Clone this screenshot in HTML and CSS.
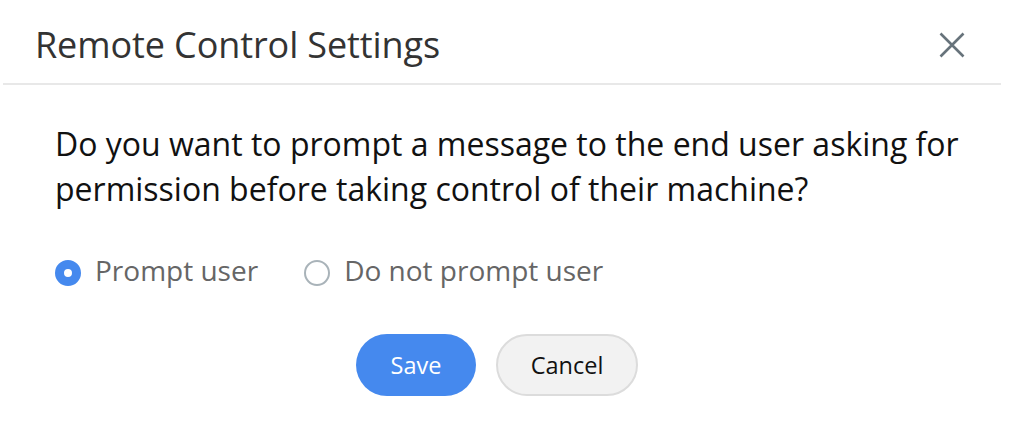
FILE: index.html
```html
<!DOCTYPE html>
<html>
<head>
<meta charset="utf-8">
<link rel="stylesheet" href="styles.css">
</head>
<body>
<div class="dialog">
  <div class="header">
    <h1 class="title">Remote Control Settings</h1>
    <button class="close" aria-label="Close">
      <svg width="26" height="26" viewBox="0 0 26 26"><path d="M1.5 1.5 L24.5 24.5 M24.5 1.5 L1.5 24.5" stroke="#67737b" stroke-width="2.6" fill="none"/></svg>
    </button>
  </div>
  <div class="content">
    <p class="question">Do you want to prompt a message to the end user asking for permission before taking control of their machine?</p>
    <div class="options">
      <label class="option"><span class="radio checked"></span><span class="label">Prompt user</span></label>
      <label class="option"><span class="radio"></span><span class="label">Do not prompt user</span></label>
    </div>
    <div class="actions">
      <button class="btn primary">Save</button>
      <button class="btn secondary">Cancel</button>
    </div>
  </div>
</div>
</body>
</html>
```

FILE: styles.css
```css
html, body {
  margin: 0;
  padding: 0;
  background: #fff;
}
body {
  font-family: "Open Sans", "Noto Sans", sans-serif;
  width: 1013px;
  height: 425px;
  overflow: hidden;
}
.dialog {
  padding: 0 12px 0 3px;
}
.header {
  display: flex;
  align-items: center;
  justify-content: space-between;
  height: 77px;
  padding: 6px 0 0 32px;
  border-bottom: 2px solid #e8e8e8;
}
.title {
  margin: 0;
  font-weight: 400;
  font-size: 36px;
  color: #333;
  letter-spacing: -0.1px;
}
.close {
  border: 0;
  background: none;
  padding: 0;
  margin-right: 36px;
  display: flex;
}
.content {
  padding: 36px 0 0 52px;
}
.question {
  margin: 0;
  width: 920px;
  font-size: 32px;
  line-height: 45px;
  color: #111;
}
.options {
  display: flex;
  gap: 46px;
  margin-top: 40px;
}
.option {
  display: flex;
  align-items: center;
  gap: 14px;
  line-height: 38px;
}
.radio {
  width: 26px;
  height: 26px;
  border-radius: 50%;
  border: 2px solid #a9b3b9;
  box-sizing: border-box;
  margin-top: 6px;
}
.radio.checked {
  border: 9px solid #4589ee;
  background: #fff;
}
.label {
  font-size: 28px;
  color: #666;
}
.actions {
  display: flex;
  justify-content: center;
  gap: 20px;
  margin-top: 45px;
  padding-right: 62px;
}
.btn {
  height: 62px;
  border-radius: 31px;
  font-family: "Open Sans", sans-serif;
  font-size: 23.5px;
  padding: 0;
}
.primary {
  width: 120px;
  background: #4589ee;
  color: #fff;
  border: 0;
}
.secondary {
  width: 142px;
  background: #f2f2f2;
  color: #111;
  border: 2px solid #dcdcdc;
}
```
